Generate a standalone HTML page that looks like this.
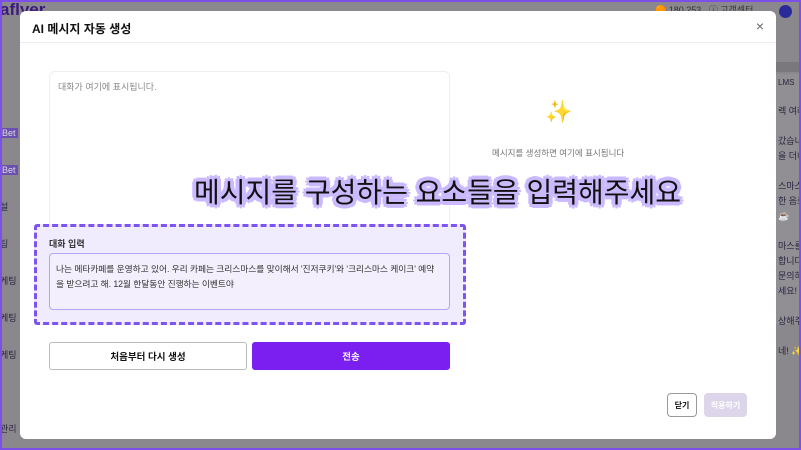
<!DOCTYPE html>
<html><head><meta charset="utf-8"><style>
*{box-sizing:border-box;margin:0;padding:0}
html,body{width:801px;height:450px;overflow:hidden}
body{background:#8a888c;font-family:"Liberation Sans","Noto Sans CJK KR",sans-serif;position:relative}
.frame{position:absolute;left:0;top:0;width:801px;height:450px;border:2px solid #7b4fe8;z-index:10;pointer-events:none}
.abs{position:absolute}
.bg{color:#2a2540;font-size:10px;white-space:nowrap;overflow:hidden}
.modal{position:absolute;left:20px;top:11px;width:756px;height:428px;background:#fff;border-radius:6px}
.hdr{height:32px;border-bottom:1px solid #ececf0;padding:9px 12px;font-size:12px;font-weight:bold;color:#111}
.chat{left:29px;top:60px;width:401px;height:170px;border:1px solid #eeeef2;border-radius:6px;padding:8px;font-size:9px;color:#888}
.hl{left:14px;top:213px;width:432px;height:101px;background:#f1ecfd;border:3px dashed #7c55f0;border-radius:3px}
.ta{left:29px;top:242px;width:401px;height:57px;border:1px solid #b9a3f5;border-radius:4px;padding:8px 6px;font-size:8.8px;line-height:15px;color:#333;background:#f3effd;letter-spacing:-0.1px}
.btn{top:331px;height:28px;border-radius:3px;font-size:9.5px;font-weight:bold;display:flex;align-items:center;justify-content:center}
.big{left:174px;top:160px;font-size:28px;color:#111;white-space:nowrap;
text-shadow:2px 0 #cbb9ff,-2px 0 #cbb9ff,0 2px #cbb9ff,0 -2px #cbb9ff,2px 2px #cbb9ff,-2px -2px #cbb9ff,2px -2px #cbb9ff,-2px 2px #cbb9ff,4px 0 #cbb9ff,-4px 0 #cbb9ff,0 4px #cbb9ff,0 -4px #cbb9ff,3px 3px #cbb9ff,-3px -3px #cbb9ff,3px -3px #cbb9ff,-3px 3px #cbb9ff,0 0 4px #cbb9ff}
</style></head><body>
<div class="frame"></div>
<div class="abs" style="left:0;top:0;font-size:17px;font-weight:bold;color:#3a1a80">aflyer</div>
<div class="abs" style="left:776px;top:62px;width:25px;height:10px;background:#7a787c"></div>
<div class="abs" style="left:776px;top:74px;width:25px;height:250px;background:#918f93"></div>
<div class="abs bg" style="left:778px;top:78px;font-size:8px">LMS</div>
<div class="abs bg" style="left:778px;top:104px;width:23px;line-height:15px;font-size:9px">렉 여러<br><br>갔습니다<br>을 더해<br><br>스마스<br>한 음료<br>☕<br><br>마스를<br>합니다!<br>문의하시<br>세요! 🎁<br><br>상해주세<br><br>네! ✨</div>
<div class="abs bg" style="left:0;top:115px;width:20px;line-height:37px;font-size:9px"><span style="background:#6a4fb0;color:#ddd;padding:0 2px">Bet</span><br><span style="background:#6a4fb0;color:#ddd;padding:0 2px">Bet</span><br>설<br>팅<br>케팅<br>케팅<br>케팅<br>!<br>관리</div>
<div class="abs bg" style="left:655px;top:3px;font-size:9px;color:#333">🟠 180,253 &nbsp; ⓘ 고객센터</div>
<div class="abs" style="left:779px;top:5px;width:13px;height:13px;border-radius:50%;background:#2b2a9a"></div>
<div class="modal">
<div class="hdr">AI 메시지 자동 생성<span style="position:absolute;right:12px;top:7px;font-weight:normal;color:#666;font-size:14px">×</span></div>
<div class="abs chat">대화가 여기에 표시됩니다.</div>
<div class="abs" style="left:525px;top:88px;font-size:22px;color:#f5c518">✨</div>
<div class="abs" style="left:472px;top:136px;font-size:8.5px;color:#777">메시지를 생성하면 여기에 표시됩니다</div>
<div class="abs hl"></div>
<div class="abs" style="left:29px;top:226px;font-size:9px;color:#333;font-weight:bold">대화 입력</div>
<div class="abs ta">나는 메타카페를 운영하고 있어. 우리 카페는 크리스마스를 맞이해서 '진저쿠키'와 '크리스마스 케이크' 예약<br>을 받으려고 해. 12월 한달동안 진행하는 이벤트야</div>
<div class="abs btn" style="left:29px;width:198px;border:1px solid #bbb;background:#fff;color:#111">처음부터 다시 생성</div>
<div class="abs btn" style="left:232px;width:198px;background:#7a1fef;color:#fff">전송</div>
<div class="abs btn" style="left:647px;top:382px;height:24px;width:30px;border:1px solid #999;background:#fff;color:#111;font-size:8px;border-radius:4px">닫기</div>
<div class="abs btn" style="left:684px;top:382px;height:24px;width:43px;background:#ddd6ea;color:#fff;font-size:8px;border-radius:4px">적용하기</div>
<div class="abs big">메시지를 구성하는 요소들을 입력해주세요</div>
</div>
</body></html>
